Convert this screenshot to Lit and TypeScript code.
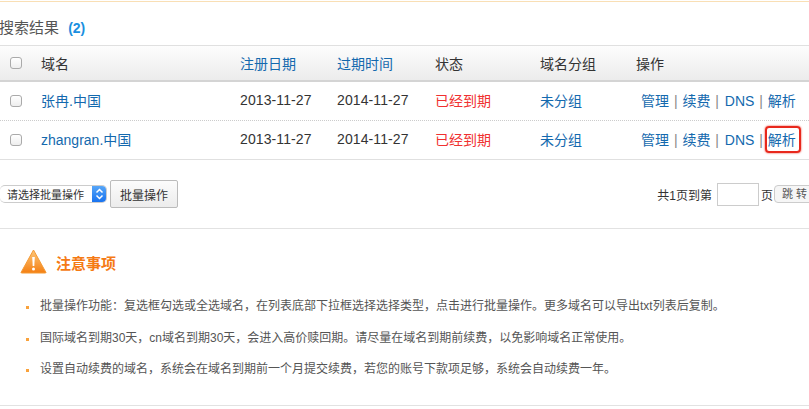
import { LitElement, html, css } from "lit";
import { customElement } from "lit/decorators.js";

const rows = [
  { name: "张冉.中国", mark: false },
  { name: "zhangran.中国", mark: true },
];
const notes = [
  "批量操作功能：复选框勾选或全选域名，在列表底部下拉框选择选择类型，点击进行批量操作。更多域名可以导出txt列表后复制。",
  "国际域名到期30天，cn域名到期30天，会进入高价赎回期。请尽量在域名到期前续费，以免影响域名正常使用。",
  "设置自动续费的域名，系统会在域名到期前一个月提交续费，若您的账号下款项足够，系统会自动续费一年。",
];

@customElement("app-root")
export class AppRoot extends LitElement {
  static styles = css`
    :host {
      display: block;
      width: 809px;
      height: 409px;
      overflow: hidden;
      background: #fff;
      font-family: "Liberation Sans", "Noto Sans CJK SC", sans-serif;
      font-size: 14px;
      color: #333;
    }
    .top { height: 1px; margin-top: 1px; background: #f9dfb5; }
    .title { height: 43px; box-sizing: border-box; padding-top: 16px; margin-left: -1px; line-height: 20px; font-size: 15px; color: #555; white-space: nowrap; }
    .title b { margin-left: 5px; font-size: 14px; color: #1a8fe0; }
    .row {
      display: grid;
      grid-template-columns: 41px 199px 97px 98px 105px 96px 1fr;
      align-items: center;
    }
    .head {
      height: 37px;
      box-sizing: border-box;
      border-top: 1px solid #e0e0e0;
      border-bottom: 2px solid #d4d4d4;
      background: linear-gradient(#fdfdfd, #ececec);
    }
    .item { height: 39px; box-sizing: border-box; border-bottom: 1px dotted #ccc; }
    .item.last { border-bottom: 1px solid #e0e0e0; }
    .item > a, .item > span { margin-bottom: 2px; }
    .date { letter-spacing: 0.1px; }
    .box {
      width: 12px; height: 12px; margin-left: 10px; box-sizing: border-box;
      border: 1px solid #aaa; border-radius: 3px;
      background: linear-gradient(#fff, #eee);
    }
    a { color: #1469ae; text-decoration: none; }
    .red { color: #f03030; }
    .ops { padding-left: 5px; white-space: nowrap; color: #888; }
    .ops a { display: inline-block; }
    .sep { margin: 0 1px; }
    .ops .dns { margin-left: 1px; }
    .mark { position: relative; }
    .mark::after {
      content: ""; position: absolute; left: -3px; right: -5px; top: -3px; bottom: -4px;
      border: 2px solid #e8281c; border-radius: 4px; box-shadow: 0 0 2px #e8281c;
    }
    .bar {
      display: flex; align-items: center; justify-content: space-between;
      height: 69px; box-sizing: border-box; border-bottom: 1px solid #e2e2e2;
    }
    .left { display: flex; align-items: center; gap: 3px; }
    .select {
      display: flex; align-items: center; justify-content: space-between;
      width: 107px; height: 18px; box-sizing: border-box; padding-left: 7px;
      border: 1px solid #ccc; border-left: 0; border-radius: 5px;
      background: #fff; font-size: 11px; overflow: hidden; white-space: nowrap;
    }
    .arrow {
      width: 15px; height: 18px; flex: none; margin-right: -1px;
      background: linear-gradient(#5aa9f8, #1570ef);
      display: flex; align-items: center; justify-content: center;
    }
    .btn {
      width: 68px; height: 28px; box-sizing: border-box; border: 1px solid #bbb; border-radius: 2px;
      background: linear-gradient(#fcfcfc, #ececec); display: flex; align-items: center; justify-content: center;
      font-size: 12px; color: #333;
    }
    .pager { display: flex; align-items: center; font-size: 12px; white-space: nowrap; }
    .pager .input { width: 42px; height: 23px; margin: 0 2px 0 5px; box-sizing: border-box; border: 1px solid #ccc; }
    .pager .jump {
      width: 40px; height: 18px; margin-left: 1px; margin-right: -5px; box-sizing: border-box;
      border: 1px solid #ccc; border-radius: 4px; background: #f6f6f6;
      font-size: 11px; letter-spacing: 3px; padding-left: 7px; line-height: 16px; color: #555;
    }
    .warn {
      display: flex; align-items: center; gap: 9px; height: 28px; margin: 19px 0 0 20px;
      font-size: 15px; font-weight: bold; color: #f57a14;
    }
    .warn svg { margin-top: -1px; }
    ul { list-style: none; margin: 15px 0 0; padding: 0 0 0 40px; font-size: 12px; color: #555; }
    li { position: relative; height: 31.5px; line-height: 31.5px; white-space: nowrap; }
    li::before {
      content: ""; position: absolute; left: -14px; top: 15px; width: 3px; height: 3px; background: #f9a23c;
    }
    .end { height: 1px; margin-top: 19.5px; background: #e2e2e2; }
  `;

  private renderRow(r: { name: string; mark: boolean }, last: boolean) {
    return html`<div class="row item ${last ? "last" : ""}">
      <div class="box"></div>
      <a href="#">${r.name}</a>
      <span class="date">2013-11-27</span>
      <span class="date">2014-11-27</span>
      <span class="red">已经到期</span>
      <a href="#">未分组</a>
      <span class="ops"><a href="#">管理</a><span class="sep"> | </span><a href="#">续费</a><span class="sep"> | </span><a href="#" class="dns">DNS</a><span class="sep"> | </span><a href="#" class=${r.mark ? "mark" : ""}>解析</a></span>
    </div>`;
  }

  render() {
    return html`
      <div class="top"></div>
      <div class="title">搜索结果 <b>(2)</b></div>
      <div class="row head">
        <div class="box"></div>
        <span>域名</span>
        <a href="#">注册日期</a>
        <a href="#">过期时间</a>
        <span>状态</span>
        <span>域名分组</span>
        <span>操作</span>
      </div>
      ${rows.map((r, i) => this.renderRow(r, i === rows.length - 1))}
      <div class="bar">
        <div class="left">
          <div class="select">请选择批量操作
            <span class="arrow"><svg width="9" height="12" viewBox="0 0 9 12" fill="none" stroke="#fff" stroke-width="1.5"><path d="M1.5 4.5 4.5 1.5 7.5 4.5M1.5 7.5 4.5 10.5 7.5 7.5"/></svg></span>
          </div>
          <div class="btn">批量操作</div>
        </div>
        <div class="pager">共1页到第<span class="input"></span>页<span class="jump">跳转</span></div>
      </div>
      <div class="warn">
        <svg width="27" height="25" viewBox="0 0 27 25">
          <defs><linearGradient id="w" x1="0" y1="0" x2="0" y2="1"><stop offset="0" stop-color="#fdc77a"/><stop offset="1" stop-color="#f47f12"/></linearGradient></defs>
          <path d="M13.5 1 26 23.5Q26 24 25 24H2Q1 24 1 23.5Z" fill="url(#w)" stroke="#f49a35" stroke-linejoin="round"/>
          <path d="M12.2 8h2.6l-.5 9h-1.6z" fill="#fff"/><circle cx="13.5" cy="20" r="1.5" fill="#fff"/>
        </svg>
        <span>注意事项</span>
      </div>
      <ul>${notes.map((n) => html`<li>${n}</li>`)}</ul>
      <div class="end"></div>
    `;
  }
}
